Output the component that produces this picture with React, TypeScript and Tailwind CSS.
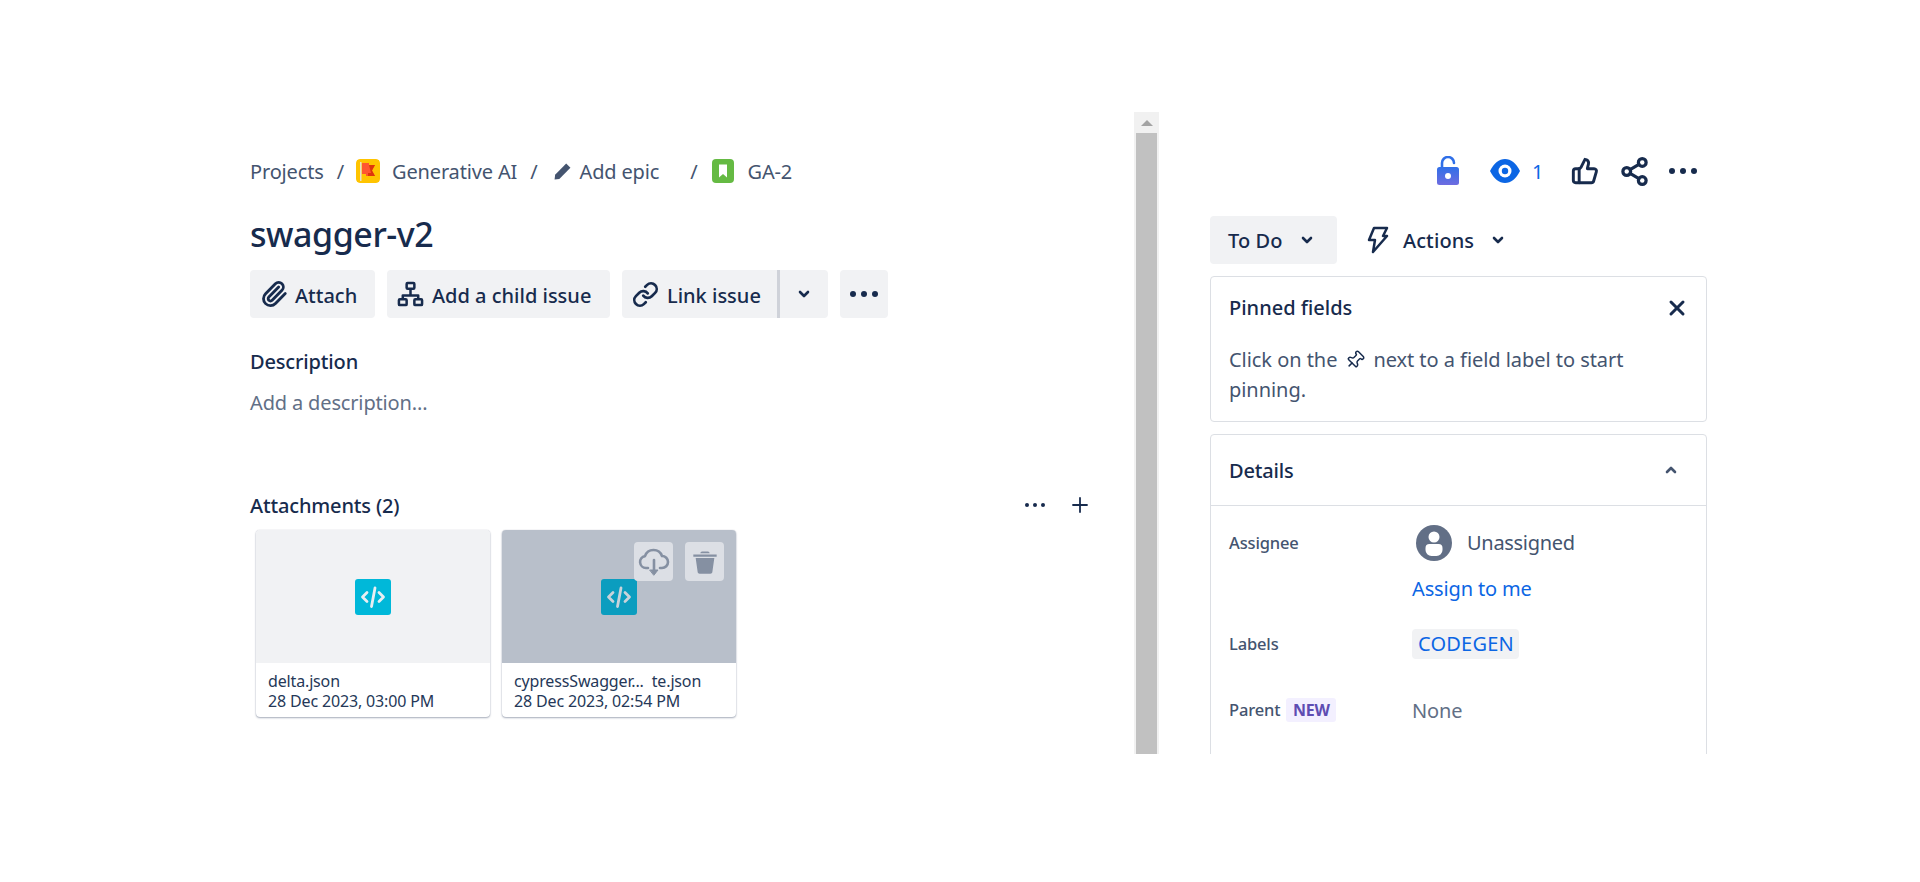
import React from "react";
import { Link, Paperclip, Pin, Plus, Share2, ThumbsUp, X } from "lucide-react";

const Chev = ({ className = "" }: { className?: string }) => (
  <svg viewBox="0 0 12 8" className={`w-[12px] h-[8px] ${className}`} fill="none" stroke="currentColor" strokeWidth="2.6" strokeLinecap="round" strokeLinejoin="round">
    <path d="M2 2 L6 6 L10 2" />
  </svg>
);
const Dots = ({ w = 24, r = 2.6 }: { w?: number; r?: number }) => (
  <svg width={w} height="8" viewBox={`0 0 ${w} 8`} fill="currentColor">
    <circle cx={r} cy="4" r={r} />
    <circle cx={w / 2} cy="4" r={r} />
    <circle cx={w - r} cy="4" r={r} />
  </svg>
);
const CodeIcon = ({ dark }: { dark?: boolean }) => (
  <div className={`w-[36px] h-[36px] rounded-[3px] flex items-center justify-center ${dark ? "bg-[#0b9dbf]" : "bg-[#00b8d9]"}`}>
    <svg viewBox="0 0 28 28" className="w-[28px] h-[28px]" fill="none" stroke={dark ? "#c9d3da" : "#e9eef2"} strokeWidth="2.8" strokeLinecap="round" strokeLinejoin="round">
      <path d="M8 9.500 L3.500 14 L8 18.500" />
      <path d="M20 9.500 L24.500 14 L20 18.500" />
      <path d="M16 5 L12.500 23.500" />
    </svg>
  </div>
);
const Card = ({ dark, name, date }: { dark?: boolean; name: string; date: string }) => (
  <div className="w-[234px] h-[187px] rounded-[4px] overflow-hidden bg-white shadow-[0_1px_2px_rgba(9,30,66,0.35),0_0_1px_rgba(9,30,66,0.25)] flex flex-col">
    <div className={`relative h-[133px] flex items-center justify-center ${dark ? "bg-[#b8bfca]" : "bg-[#f1f2f4]"}`}>
      <CodeIcon dark={dark} />
      {dark && (
        <div className="absolute top-[12px] right-[12px] flex gap-[12px]">
          <div className="w-[39px] h-[39px] rounded-[4px] bg-[#dcdfe5] flex items-center justify-center">
            <svg viewBox="0 0 32 32" className="w-[32px] h-[32px]" fill="none" stroke="#8590a2" strokeWidth="2.600" strokeLinecap="round" strokeLinejoin="round">
              <path d="M10 22H8a6 6 0 0 1-1-11.900A9 9 0 0 1 24 10a6 6 0 0 1 0 12h-2" />
              <path d="M16 14v13" />
              <path d="M12 24h8l-4 5z" fill="#8590a2" strokeWidth="1" />
            </svg>
          </div>
          <div className="w-[39px] h-[39px] rounded-[4px] bg-[#dcdfe5] flex items-center justify-center">
            <svg viewBox="0 0 24 24" className="w-[28px] h-[28px]" fill="#8590a2">
              <path d="M2 5.500h20v2H2z" />
              <path d="M8 4.500c0-1 1-1.500 2-1.500h4c1 0 2 .5 2 1.500z" />
              <path d="M4 8.500h16l-1.700 12c-.1.900-.8 1.500-1.700 1.500H7.400c-.9 0-1.600-.6-1.700-1.500z" />
            </svg>
          </div>
        </div>
      )}
    </div>
    <div className="pl-[12px] pt-[8px] text-[16px] leading-[20px] text-[#253858] tracking-[-0.15px]">
      <div className="whitespace-pre">{name}</div>
      <div>{date}</div>
    </div>
  </div>
);
const Btn = ({ icon, label, w }: { icon: React.ReactNode; label: string; w: string }) => (
  <div className={`${w} h-[48px] rounded-[4px] bg-[#f1f2f4] flex items-center pl-[10px] gap-[8px] font-medium text-[20px] tracking-[0px]`}>
    {icon}
    <span className="pt-[3px]">{label}</span>
  </div>
);

export default function App() {
  return (
    <div className="w-[1920px] h-[882px] bg-white pt-[112px] overflow-hidden text-[#172b4d] font-['Noto_Sans','Open_Sans',sans-serif] tracking-[-0.15px]">
      <div className="flex h-[642px] overflow-hidden">
        <main className="w-[1134px] pl-[250px] shrink-0 flex flex-col">
          <nav className="mt-[44px] h-[30px] flex items-center text-[20px] text-[#44546f]">
            <span className="pt-[1px]">Projects</span>
            <span className="ml-[13px] pt-[1px]">/</span>
            <svg viewBox="0 0 24 24" className="ml-[12px] w-[24px] h-[24px] rounded-[4px]">
              <rect width="24" height="24" rx="4" fill="#ffc400" />
              <rect x="4" y="3" width="1.500" height="19" fill="#e8dfc9" />
              <path d="M6 4h7v2h6l-3 5.500 3 5.500H10v-2H6z" fill="#ff5630" />
              <path d="M13 6h6l-3 5.500 3 5.500h-7v-3h3z" fill="#de350b" />
            </svg>
            <span className="ml-[12px] pt-[1px]">Generative AI</span>
            <span className="ml-[13px] pt-[1px]">/</span>
            <svg viewBox="0 0 18 18" className="ml-[15px] w-[19px] h-[19px]" fill="#44546f">
              <path d="M12.500 1.500 L16.500 5.500 L6 16 L1.500 16.500 L2 12z" />
            </svg>
            <span className="ml-[8px] pt-[1px]">Add epic</span>
            <span className="ml-[31px] pt-[1px]">/</span>
            <svg viewBox="0 0 22 24" className="ml-[14px] w-[22px] h-[24px]">
              <rect width="22" height="24" rx="4" fill="#65ba43" />
              <path d="M7 5.500h8v13l-4-3.500-4 3.500z" fill="#fff" />
            </svg>
            <span className="ml-[14px] pt-[1px]">GA-2</span>
          </nav>
          <h1 className="mt-[24px] h-[48px] flex items-center text-[34px] font-medium tracking-[-0.45px]">swagger-v2</h1>
          <div className="mt-[12px] flex gap-[12px]">
            <Btn w="w-[125px]" label="Attach" icon={<Paperclip size={28} strokeWidth={2.400} className="-mr-[1px]" />} />
            <Btn w="w-[223px]" label="Add a child issue" icon={
              <svg viewBox="0 0 28 28" className="w-[27px] h-[27px]" fill="none" stroke="currentColor" strokeWidth="2.600" strokeLinejoin="round">
                <rect x="10" y="2" width="8" height="6" rx="1" />
                <rect x="2" y="19" width="8" height="6" rx="1" />
                <rect x="18" y="19" width="8" height="6" rx="1" />
                <path d="M14 8v7M6 19v-4h16v4" />
              </svg>
            } />
            <div className="flex h-[48px] rounded-[4px] overflow-hidden bg-[#f1f2f4] font-medium text-[20px] tracking-[0px]">
              <div className="w-[155px] flex items-center pl-[10px] gap-[8px]">
                <Link size={27} strokeWidth={2.400} />
                <span className="pt-[3px]">Link issue</span>
              </div>
              <div className="w-[3px] bg-[#cfd2d9]" />
              <div className="w-[48px] flex items-center justify-center"><Chev /></div>
            </div>
            <div className="w-[48px] h-[48px] rounded-[4px] bg-[#f1f2f4] flex items-center justify-center"><Dots w={28} r={3} /></div>
          </div>
          <div className="mt-[30px] h-[28px] flex items-center text-[20px] font-medium">Description</div>
          <div className="mt-[13px] h-[28px] flex items-center text-[20px] text-[#626f86]">Add a description...</div>
          <div className="mt-[75px] h-[28px] w-[842px] flex items-center justify-between">
            <span className="text-[20px] font-medium">Attachments (2)</span>
            <div className="flex items-center gap-[23px] -mt-[3px]">
              <Dots w={20} r={2} />
              <Plus size={24} strokeWidth={1.800} />
            </div>
          </div>
          <div className="mt-[10px] ml-[6px] flex gap-[12px]">
            <Card name="delta.json" date="28 Dec 2023, 03:00 PM" />
            <Card dark name="cypressSwagger...  te.json" date="28 Dec 2023, 02:54 PM" />
          </div>
        </main>

        <div className="w-[25px] shrink-0 bg-[#f1f1f1] flex flex-col items-center">
          <div className="h-[21px] w-full flex items-center justify-center">
            <div className="w-0 h-0 border-x-[6px] border-x-transparent border-b-[6px] border-b-[#a3a3a3]" />
          </div>
          <div className="flex-1 w-[21px] bg-[#c1c1c1]" />
        </div>

        <aside className="ml-[51px] w-[497px] shrink-0 text-[20px]">
          <div className="mt-[44px] h-[30px] pr-[10px] flex items-center justify-end">
            <svg viewBox="0 0 22 30" className="w-[22px] h-[30px]">
              <defs>
                <linearGradient id="lk" x1="0" y1="0" x2="0" y2="1">
                  <stop offset="0" stopColor="#2f6fe8" />
                  <stop offset="1" stopColor="#6e6ce0" />
                </linearGradient>
              </defs>
              <path d="M5 12V7a6 6 0 0 1 12 0" fill="none" stroke="#2f6fe8" strokeWidth="2.600" strokeLinecap="round" />
              <rect x="0" y="11" width="22" height="18" rx="2.500" fill="url(#lk)" />
              <circle cx="11" cy="20" r="3" fill="#fff" />
            </svg>
            <svg viewBox="0 0 30 24" className="ml-[31px] w-[30px] h-[24px]">
              <path d="M0 12C4 4 9 0 15 0s11 4 15 12c-4 8-9 12-15 12S4 20 0 12z" fill="#0c66e4" />
              <circle cx="15" cy="12" r="6.500" fill="#fff" />
              <circle cx="15" cy="12" r="3.200" fill="#0c66e4" />
            </svg>
            <span className="ml-[12px] w-[12px] pt-[1px] text-[#0c66e4]">1</span>
            <ThumbsUp size={28} strokeWidth={2.500} className="ml-[27px]" />
            <Share2 size={31} strokeWidth={2.500} className="ml-[20px]" />
            <span className="ml-[19px]"><Dots w={28} r={3} /></span>
          </div>
          <div className="mt-[30px] flex items-center h-[48px]">
            <div className="w-[127px] h-[48px] rounded-[4px] bg-[#f1f2f4] flex items-center pl-[18px] font-medium tracking-[0.1px]">
              <span className="pt-[2px]">To Do</span>
              <Chev className="ml-[18px]" />
            </div>
            <svg viewBox="0 0 22 28" className="ml-[30px] w-[22px] h-[28px]" fill="none" stroke="currentColor" strokeWidth="2.500" strokeLinejoin="round" strokeLinecap="round">
              <path d="M7 2h13l-4 8h4L6 26l2-12H2z" />
            </svg>
            <span className="ml-[14px] pt-[2px] font-medium tracking-[0.1px]">Actions</span>
            <Chev className="ml-[18px]" />
          </div>
          <section className="mt-[12px] h-[146px] border border-[#dcdfe4] rounded-[4px] pl-[18px] pr-[19px]">
            <div className="h-[61px] flex items-center justify-between font-medium tracking-[0px]">
              <span>Pinned fields</span>
              <X size={24} strokeWidth={3} className="mr-[-2px]" />
            </div>
            <div className="mt-[7px] leading-[30px] text-[#44546f] tracking-[-0.05px]">
              <div className="flex items-center h-[30px]">
                <span>Click on the</span>
                <Pin size={20} strokeWidth={1.800} className="rotate-45 ml-[8px] mr-[8px] text-[#172b4d]" />
                <span>next to a field label to start</span>
              </div>
              <div>pinning.</div>
            </div>
          </section>
          <section className="mt-[12px] border border-[#dcdfe4] rounded-t-[4px] h-[330px]">
            <div className="h-[71px] pl-[18px] pr-[19px] flex items-center justify-between font-medium border-b border-[#dcdfe4]">
              <span className="pt-[2px]">Details</span>
              <Chev className="rotate-180 mr-[10px] text-[#44546f]" />
            </div>
            <div className="pl-[18px]">
              <div className="flex mt-[19px]">
                <div className="w-[183px] h-[36px] flex items-center text-[16.5px] font-medium text-[#44546f]">Assignee</div>
                <div className="ml-[4px] w-[36px] h-[36px]">
                  <svg viewBox="0 0 36 36" className="w-[36px] h-[36px]">
                    <circle cx="18" cy="18" r="18" fill="#626f86" />
                    <circle cx="18" cy="12" r="5.500" fill="#fff" />
                    <path d="M9.500 23a4 4 0 0 1 4-4h9a4 4 0 0 1 4 4v2a6 6 0 0 1-6 6h-5a6 6 0 0 1-6-6z" fill="#fff" />
                  </svg>
                </div>
                <div className="ml-[15px] h-[36px] flex items-center text-[#44546f] tracking-[-0.3px]">Unassigned</div>
              </div>
              <div className="ml-[183px] mt-[14px] h-[28px] flex items-center text-[#0c66e4]">Assign to me</div>
              <div className="flex mt-[26px] items-center h-[30px]">
                <div className="w-[183px] pt-[1px] text-[16.5px] font-medium text-[#44546f]">Labels</div>
                <div className="h-[30px] pl-[6px] pr-[5px] rounded-[4px] bg-[#f1f2f4] flex items-center text-[#0c66e4] tracking-[0.2px]">CODEGEN</div>
              </div>
              <div className="flex mt-[39px] items-center h-[24px]">
                <div className="w-[183px] flex items-center">
                  <span className="pt-[1px] text-[16.5px] font-medium text-[#44546f]">Parent</span>
                  <span className="ml-[6px] w-[50px] h-[24px] rounded-[3px] bg-[#f3f0ff] text-[#5e4db2] text-[16px] font-bold flex items-center justify-center">NEW</span>
                </div>
                <div className="pt-[1px] text-[#626f86]">None</div>
              </div>
            </div>
          </section>
        </aside>
      </div>
    </div>
  );
}
